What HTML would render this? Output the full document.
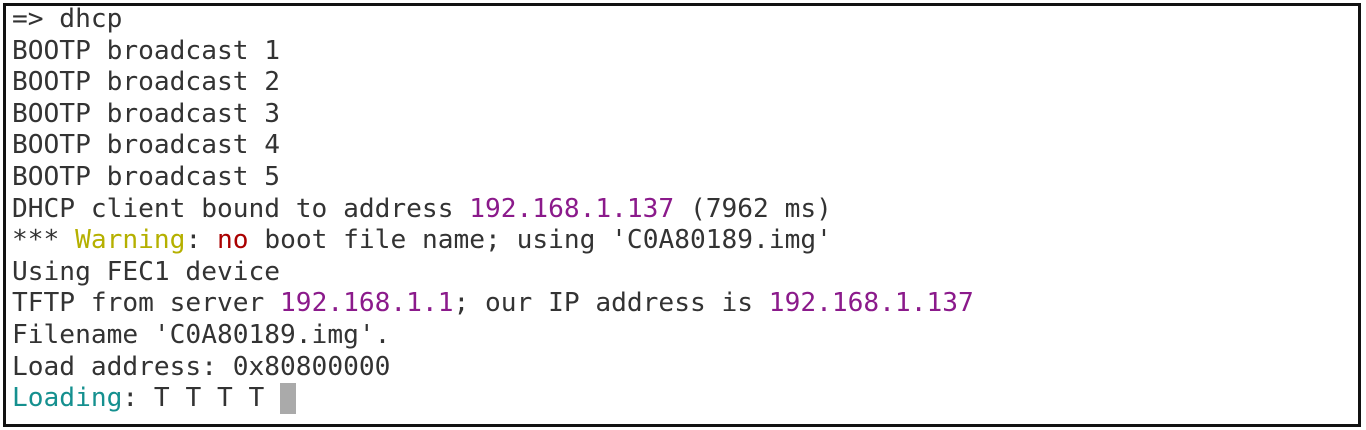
<!DOCTYPE html>
<html><head><meta charset="utf-8"><style>
html,body{margin:0;padding:0;background:#fff;width:1366px;height:430px;overflow:hidden}
.box{position:absolute;left:3px;top:3px;width:1352px;height:418px;border:3px solid #111;box-sizing:content-box}
pre{position:absolute;left:12px;top:4px;margin:0;font-family:"DejaVu Sans Mono","Liberation Mono",monospace;font-size:26.2px;line-height:31.6px;color:#333}
.p{color:#8b1a8b}.y{color:#b5b000}.r{color:#a00}.c{color:#15908f}
.cur{display:inline-block;width:16px;height:31px;background:#aaa;vertical-align:top}
</style></head><body>
<div class="box"></div>
<pre>=&gt; dhcp
BOOTP broadcast 1
BOOTP broadcast 2
BOOTP broadcast 3
BOOTP broadcast 4
BOOTP broadcast 5
DHCP client bound to address <span class="p">192.168.1.137</span> (7962 ms)
*** <span class="y">Warning</span>: <span class="r">no</span> boot file name; using 'C0A80189.img'
Using FEC1 device
TFTP from server <span class="p">192.168.1.1</span>; our IP address is <span class="p">192.168.1.137</span>
Filename 'C0A80189.img'.
Load address: 0x80800000
<span class="c">Loading</span>: T T T T <span class="cur"></span></pre>
</body></html>
